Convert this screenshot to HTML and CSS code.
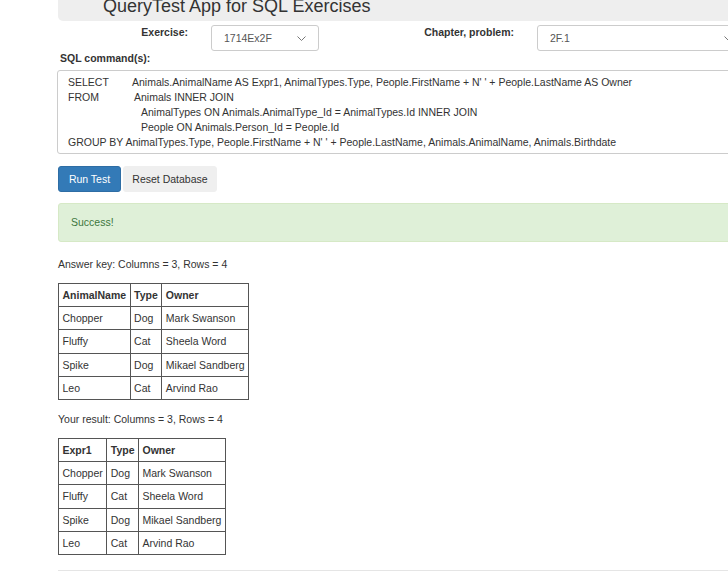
FILE: index.html
```html
<!DOCTYPE html>
<html>
<head>
<meta charset="utf-8">
<title>QueryTest App for SQL Exercises</title>
<link rel="stylesheet" href="styles.css">
</head>
<body>
<div class="page">
  <div class="jumbotron">
    <h1 class="title">QueryTest App for SQL Exercises</h1>
  </div>

  <div class="form-row">
    <label class="label label-ex">Exercise:</label>
    <div class="select select-ex">
      <span>1714Ex2F</span>
      <svg class="chev" width="9" height="5" viewBox="0 0 9 5"><polyline points="0.5,0.5 4.5,4.5 8.5,0.5" fill="none" stroke="#777" stroke-width="1"/></svg>
    </div>
    <label class="label label-ch">Chapter, problem:</label>
    <div class="select select-ch">
      <span>2F.1</span>
      <svg class="chev" width="9" height="5" viewBox="0 0 9 5"><polyline points="0.5,0.5 4.5,4.5 8.5,0.5" fill="none" stroke="#777" stroke-width="1"/></svg>
    </div>
  </div>

  <div class="sql-label">SQL command(s):</div>
  <div class="sql-box">
    <div class="ln"><span class="kw kw-select">SELECT</span>Animals.AnimalName AS Expr1, AnimalTypes.Type, People.FirstName + N' ' + People.LastName AS Owner</div>
    <div class="ln"><span class="kw kw-from">FROM</span>Animals INNER JOIN</div>
    <div class="ln ind">AnimalTypes ON Animals.AnimalType_Id = AnimalTypes.Id INNER JOIN</div>
    <div class="ln ind">People ON Animals.Person_Id = People.Id</div>
    <div class="ln">GROUP BY AnimalTypes.Type, People.FirstName + N' ' + People.LastName, Animals.AnimalName, Animals.Birthdate</div>
    <div class="ln">ORDER BY Animals.Birthdate</div>
  </div>

  <div class="buttons">
    <button class="btn btn-primary">Run Test</button>
    <button class="btn btn-default">Reset Database</button>
  </div>

  <div class="alert">Success!</div>

  <p class="caption cap-key">Answer key: Columns = 3, Rows = 4</p>
  <table class="grid">
    <tr><th>AnimalName</th><th>Type</th><th>Owner</th></tr>
    <tr><td>Chopper</td><td>Dog</td><td>Mark Swanson</td></tr>
    <tr><td>Fluffy</td><td>Cat</td><td>Sheela Word</td></tr>
    <tr><td>Spike</td><td>Dog</td><td>Mikael Sandberg</td></tr>
    <tr><td>Leo</td><td>Cat</td><td>Arvind Rao</td></tr>
  </table>

  <p class="caption cap-res">Your result: Columns = 3, Rows = 4</p>
  <table class="grid">
    <tr><th>Expr1</th><th>Type</th><th>Owner</th></tr>
    <tr><td>Chopper</td><td>Dog</td><td>Mark Swanson</td></tr>
    <tr><td>Fluffy</td><td>Cat</td><td>Sheela Word</td></tr>
    <tr><td>Spike</td><td>Dog</td><td>Mikael Sandberg</td></tr>
    <tr><td>Leo</td><td>Cat</td><td>Arvind Rao</td></tr>
  </table>

  <hr class="rule">
</div>
</body>
</html>
```

FILE: styles.css
```css
html, body {
  margin: 0;
  padding: 0;
  background: #fff;
  overflow: hidden;
}
body {
  font-family: "Liberation Sans", Arial, sans-serif;
  font-size: 10.5px;
  line-height: 15px;
  color: #333;
}
.page {
  margin-left: 58px;
  width: 760px;
}
.jumbotron {
  height: 21px;
  background: #eee;
  border-radius: 0 0 5px 5px;
  overflow: hidden;
}
.title {
  margin: 0;
  padding-left: 45px;
  font-size: 18px;
  line-height: 13px;
  font-weight: normal;
  color: #333;
}
.form-row {
  display: flex;
  align-items: flex-start;
  margin-top: 4px;
  height: 26px;
}
.label {
  font-weight: bold;
  text-align: right;
  line-height: 15px;
  padding-top: 0;
  flex: none;
}
.label-ex { width: 130px; margin-right: 23px; }
.label-ch { width: 195px; margin-right: 23px; }
.select {
  box-sizing: border-box;
  height: 26px;
  border: 1px solid #ccc;
  border-radius: 3px;
  background: #fff;
  color: #555;
  display: flex;
  align-items: center;
  justify-content: space-between;
  padding: 0 12px 0 12px;
  flex: none;
}
.select-ex { width: 108px; }
.select-ch { width: 209px; }
.chev { display: block; margin-top: 1px; }
.sql-label {
  font-weight: bold;
  margin-left: 2px;
  margin-top: 0;
  line-height: 15px;
}
.sql-box {
  box-sizing: border-box;
  margin-top: 4px;
  margin-left: -1px;
  height: 84px;
  border: 1px solid #ccc;
  border-radius: 3px;
  padding: 4px 10px;
  overflow: hidden;
  white-space: nowrap;
  background: #fff;
}
.ln { line-height: 15px; }
.kw { display: inline-block; }
.kw-select { width: 64px; }
.kw-from { width: 66px; }
.ind { padding-left: 73px; }
.buttons {
  display: flex;
  gap: 2px;
  margin-top: 12px;
}
.btn {
  box-sizing: border-box;
  height: 26px;
  font-family: inherit;
  font-size: 10.5px;
  line-height: 15px;
  border-radius: 3px;
  padding: 0;
  white-space: nowrap;
  text-align: center;
  cursor: pointer;
}
.btn-primary {
  background: #337ab7;
  border: 1px solid #2e6da4;
  color: #fff;
  width: 63px;
}
.btn-default {
  background: #efefef;
  border: 1px solid #efefef;
  color: #333;
  width: 94px;
}
.alert {
  box-sizing: border-box;
  margin-top: 11px;
  height: 39px;
  background: #dff0d8;
  border: 1px solid #d6e9c6;
  border-radius: 3px;
  color: #3c763d;
  padding: 11px 12px;
  line-height: 15px;
}
.caption {
  margin: 0;
  line-height: 15px;
}
.cap-key { margin-top: 15px; margin-bottom: 11px; }
.cap-res { margin-top: 12px; margin-bottom: 11px; }
.grid {
  border-collapse: collapse;
}
.grid th, .grid td {
  border: 1px solid #555;
  padding: 4px 3.5px 3.2px 3.5px;
  line-height: 15px;
  text-align: left;
  white-space: nowrap;
}
.grid th { font-weight: bold; }
.rule {
  border: 0;
  border-top: 1px solid #e5e5e5;
  margin: 15px 0 0 0;
}
```
